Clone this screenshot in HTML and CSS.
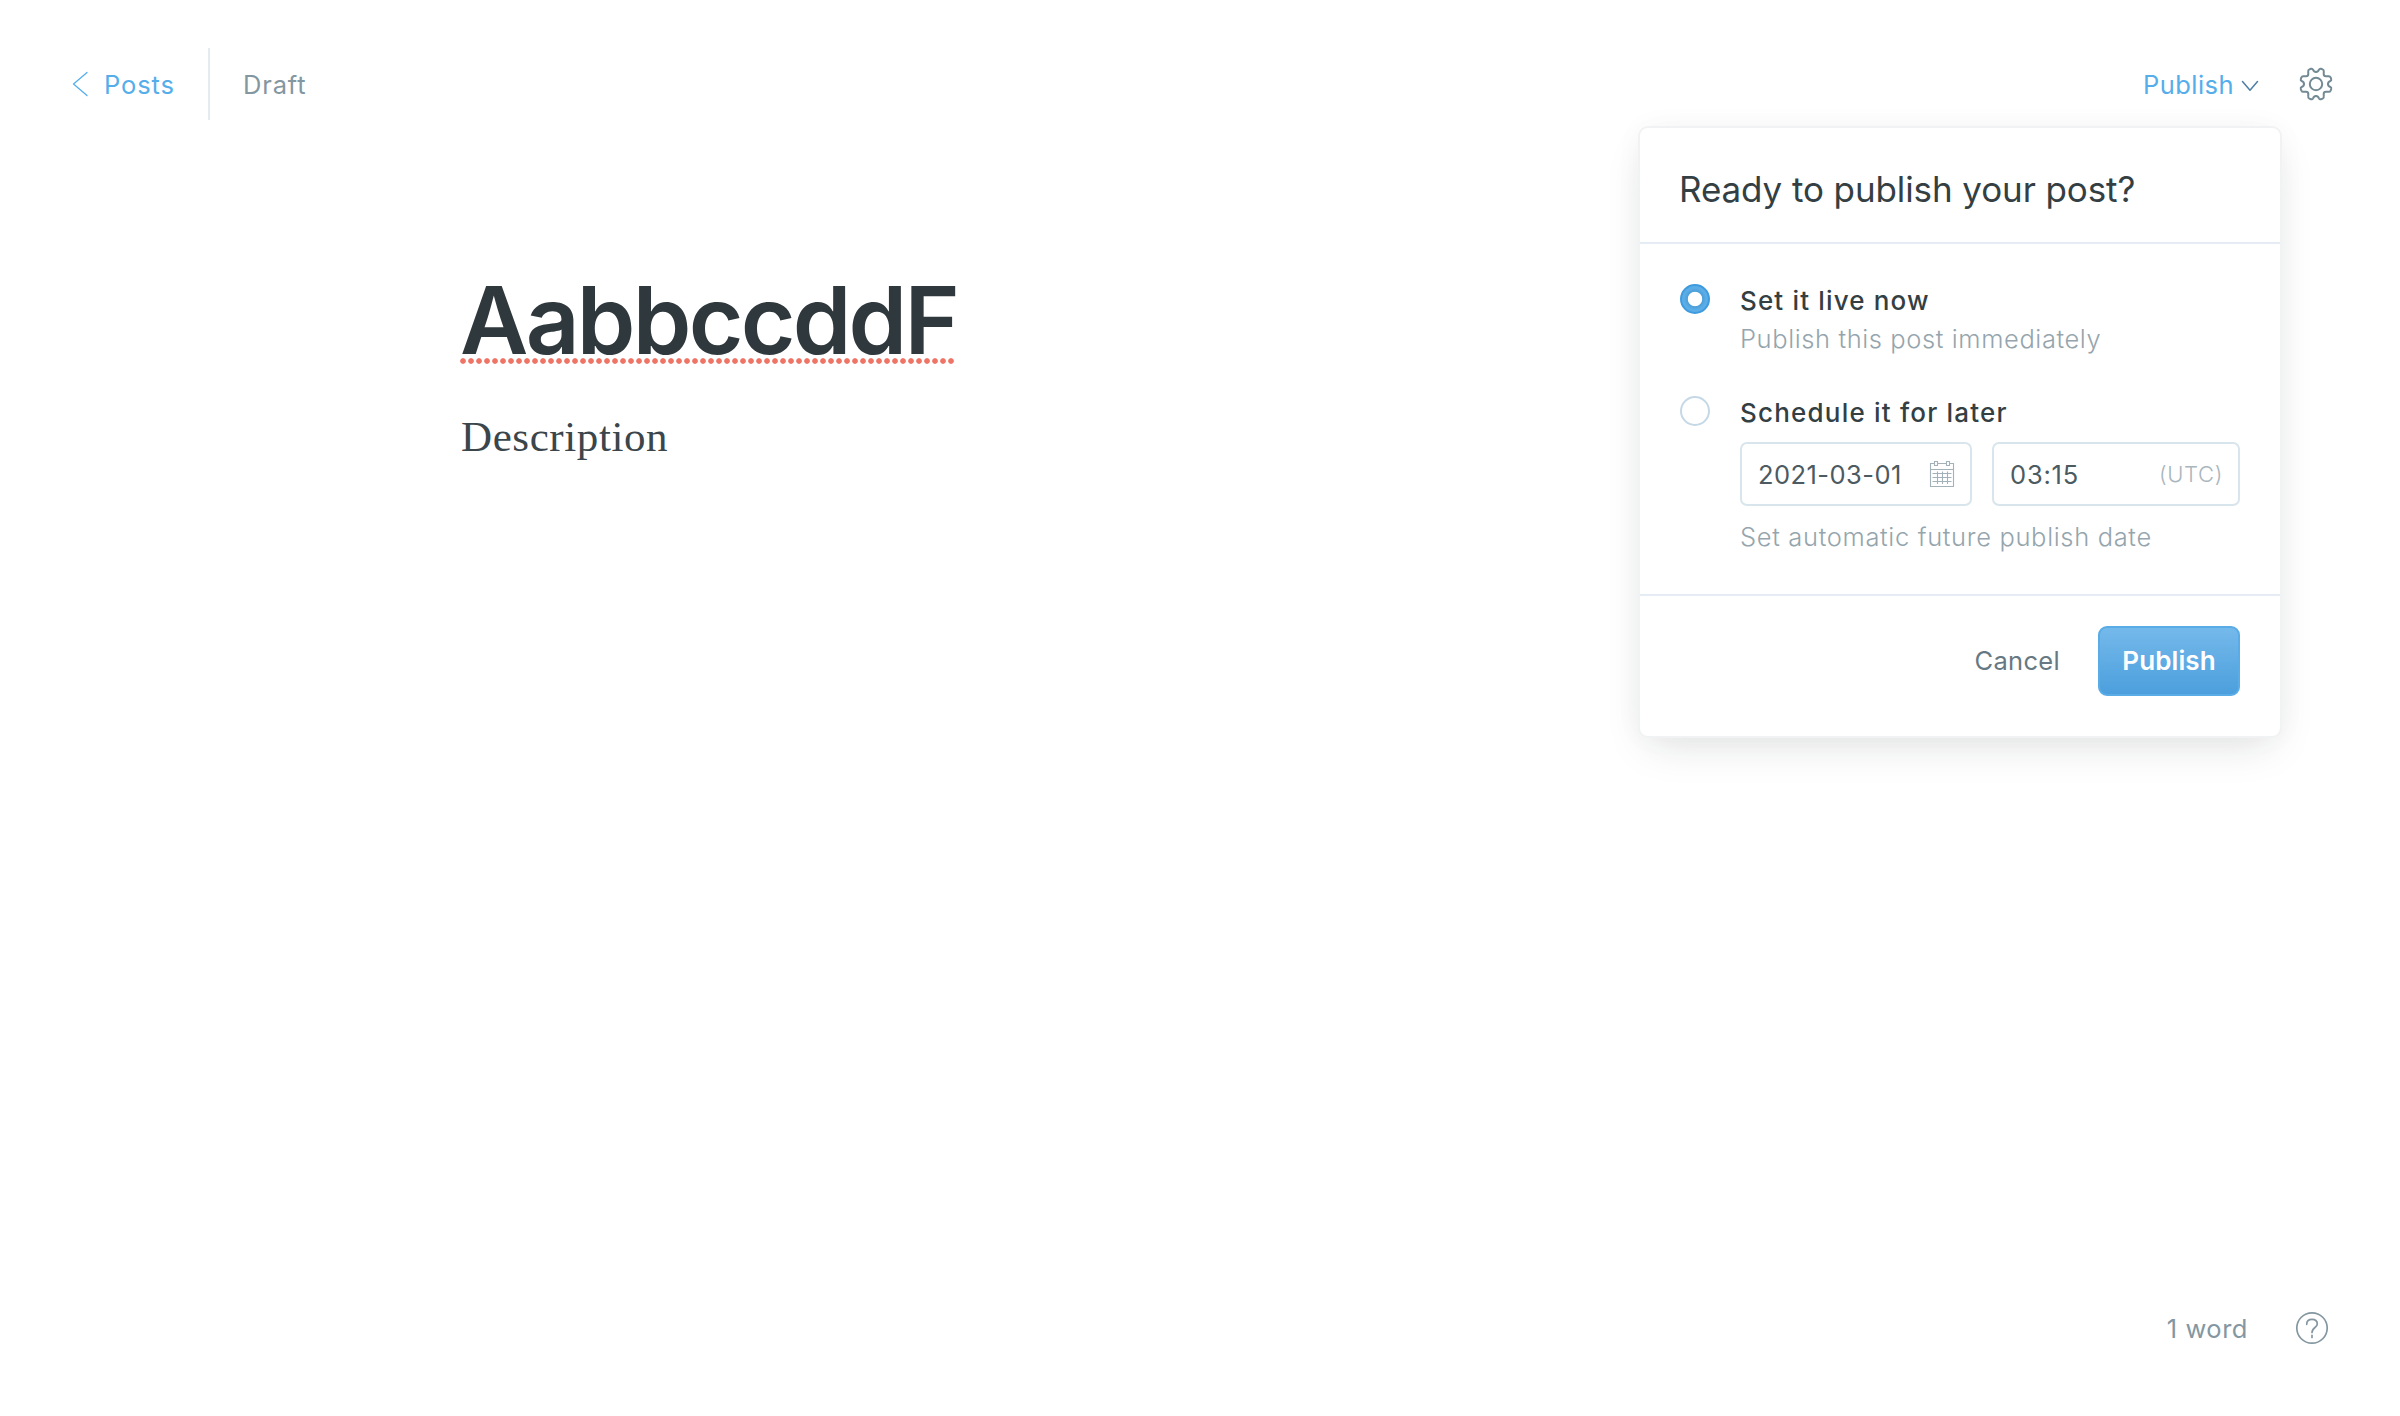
FILE: index.html
```html
<!DOCTYPE html>
<html lang="en">
<head>
<meta charset="utf-8">
<title>Draft post</title>
<link rel="stylesheet" href="styles.css">
</head>
<body>
<div class="editor">
  <header class="topbar">
    <a class="back">
      <svg class="back-icon" width="16" height="26" viewBox="0 0 16 26"><path d="M15 1.5 1.5 13 15 24.5"/></svg>
      <span>Posts</span>
    </a>
    <span class="status">Draft</span>
    <div class="actions">
      <a class="publish-trigger">Publish
        <svg class="chevron" width="18" height="12" viewBox="0 0 18 12"><path d="M1.5 1.5 9 10.2 16.5 1.5"/></svg>
      </a>
      <svg class="gear" width="34" height="34" viewBox="-17 -17 34 34">
        <defs><path id="tooth" d="M0-12C2-12 2.5-13 3-14.3Q3.6-15.6 5-15.2L6.6-14.6Q8-14 7.8-12.4L7.7-10Q7.7-7.7 10-7.7L12.4-7.8Q14-8 14.6-6.6L15.2-5Q15.6-3.6 14.3-3C13-2.5 12-2 12 0"/></defs>
        <use href="#tooth"/><use href="#tooth" transform="rotate(90)"/><use href="#tooth" transform="rotate(180)"/><use href="#tooth" transform="rotate(270)"/>
        <circle r="6.2"/>
      </svg>
    </div>
  </header>

  <main class="post">
    <h1 class="post-title"><span class="misspelled">AabbccddF</span></h1>
    <p class="post-body">Description</p>
  </main>

  <footer class="bottombar">
    <span class="word-count">1 word</span>
    <svg class="help" width="34" height="34" viewBox="0 0 34 34"><circle cx="17" cy="17" r="15.2"/><path d="M11.7 13.3C11.7 10 13.8 8.3 17 8.3S22.3 10.2 22.3 13C22.3 16.8 17 16.2 17 21.5"/><path d="M17 24.4v2"/></svg>
  </footer>

  <section class="popup">
    <h2 class="popup-title">Ready to publish your post?</h2>
    <div class="popup-body">
      <div class="option">
        <span class="radio radio-on"></span>
        <div>
          <div class="label label-now">Set it live now</div>
          <div class="hint">Publish this post immediately</div>
        </div>
      </div>
      <div class="option">
        <span class="radio"></span>
        <div>
          <div class="label">Schedule it for later</div>
          <div class="fields">
            <div class="field date"><span class="date-value">2021-03-01</span>
              <svg class="calendar" width="26" height="28" viewBox="-1 -1 26 28"><path d="M4 2.5H.5v23h23v-23H20M8 2.5h8M.5 8.5h23M4.5.5h3v4h-3zM16.500.5h3v4h-3z"/><path d="M2.500 12.500h19M2.500 16.500h19M2.500 20.500h19M7.500 10.500v12.500M12.500 10.500v12.500M17.500 10.500v12.500"/></svg>
            </div>
            <div class="field time"><span class="time-value">03:15</span><span class="zone">(UTC)</span></div>
          </div>
          <div class="hint hint-later">Set automatic future publish date</div>
        </div>
      </div>
    </div>
    <div class="popup-footer">
      <button class="cancel">Cancel</button>
      <button class="publish">Publish</button>
    </div>
  </section>
</div>
</body>
</html>
```
FILE: styles.css
```css
* { box-sizing: border-box; }

body {
  margin: 0;
  background: #fff;
  color: #343f44;
  font: 400 25.5px/36px Inter, "Liberation Sans", sans-serif;
}

svg { display: block; fill: none; stroke-linecap: round; stroke-linejoin: round; }

.editor {
  position: relative;
  display: flex;
  flex-direction: column;
  height: 1416px;
}

/* Top bar */
.topbar {
  display: flex;
  align-items: center;
  height: 168px;
  padding: 0 66px 0 72px;
}
.back {
  display: flex;
  align-items: center;
  width: 138px;
  height: 72px;
  border-right: 2px solid #e5ecf1;
  color: #55aeea;
  letter-spacing: 0.9px;
}
.back span { padding: 1px 0 0 16px; }
.back-icon { stroke: #55aeea; stroke-width: 1.3; }
.status {
  padding: 1px 0 0 33px;
  color: #8497a1;
  letter-spacing: 0.85px;
}
.actions {
  display: flex;
  align-items: center;
  margin-left: auto;
}
.publish-trigger {
  display: flex;
  align-items: center;
  gap: 7px;
  padding-top: 1px;
  color: #55aeea;
  letter-spacing: 0.45px;
}
.chevron { margin-top: 3px; stroke: #4e7ea5; stroke-width: 1.5; }
.gear { margin: 0 1px 0 40px; stroke: #738a94; stroke-width: 2; }

/* Post content */
.post { flex: 1; padding: 90px 0 0 460px; }
.post-title {
  margin: 0;
  color: #2f383c;
  font-size: 94px;
  font-weight: 600;
  line-height: 124px;
  letter-spacing: -2.75px;
}
.misspelled {
  display: inline-block;
  width: 494px;
  height: 106px;
  background: radial-gradient(circle at 3px 3px, #ee7565 2.4px, rgba(238, 117, 101, 0) 3.2px) 0 100px / 8px 6px repeat-x;
}
.post-body {
  margin: 23px 0 0 1px;
  color: #3a464b;
  font: 43px/64px Georgia, "Liberation Serif", serif;
  letter-spacing: 0.6px;
}

/* Bottom bar */
.bottombar {
  display: flex;
  align-items: center;
  justify-content: flex-end;
  height: 176px;
  padding: 0 71px 0 0;
}
.word-count { padding-top: 2px; color: #8497a1; letter-spacing: 0.52px; }
.help { margin-left: 47px; stroke: #8497a1; stroke-width: 1.7; }

/* Publish menu */
.popup {
  position: absolute;
  top: 126px;
  right: 118px;
  width: 644px;
  border: 2px solid #f1f2f3;
  border-radius: 10px;
  background: #fff;
  box-shadow: 0 16px 40px -10px rgba(20, 30, 30, 0.13), 0 0 30px rgba(20, 30, 30, 0.03);
}
.popup-title {
  height: 116px;
  margin: 0;
  padding: 9px 0 0 39px;
  border-bottom: 2px solid #e5ecf3;
  color: #343f44;
  font-size: 35px;
  font-weight: 400;
  line-height: 105px;
  letter-spacing: -0.1px;
}
.popup-body {
  display: flex;
  flex-direction: column;
  gap: 36px;
  padding: 40px;
  height: 350px;
}
.option { display: grid; grid-template-columns: 60px 1fr; }
.radio {
  width: 30px;
  height: 30px;
  border: 2px solid #c5d8e6;
  border-radius: 50%;
}
.radio-on {
  border-color: #3e9bdd;
  background: radial-gradient(circle, #fff 6.8px, #4c9fd8 7.6px, #5bade8 11px);
}
.label { font-size: 26px; font-weight: 500; line-height: 34px; letter-spacing: 1.2px; }
.label-now { letter-spacing: 1.15px; }
.hint {
  color: #95a5ad;
  font-weight: 300;
  line-height: 42px;
  letter-spacing: 0.6px;
}
.fields { display: grid; grid-template-columns: 232px 248px; gap: 20px; margin-top: 12px; }
.field {
  display: flex;
  align-items: center;
  justify-content: space-between;
  height: 64px;
  padding: 0 15px 0 16px;
  border: 2px solid #d9e5ec;
  border-radius: 7px;
  color: #4c5a61;
}
.date-value { padding-top: 1px; letter-spacing: 0.45px; }
.time-value { padding-top: 1px; letter-spacing: 0.8px; }
.calendar { stroke: #a3b1b8; stroke-width: 1.1; stroke-linecap: butt; stroke-linejoin: miter; }
.zone { color: #a9b6bd; font-size: 22px; font-weight: 300; letter-spacing: 0.65px; }
.hint-later { margin-top: 10px; letter-spacing: 0.66px; }

.popup-footer {
  display: flex;
  justify-content: flex-end;
  padding: 30px 40px 40px;
  border-top: 2px solid #e5ecf3;
}
button {
  height: 70px;
  padding: 0;
  border: 0;
  background: none;
  font: inherit;
}
.cancel { margin-right: 38px; color: #667982; letter-spacing: 0.31px; }
.publish {
  width: 142px;
  border: 2px solid #5aace6;
  border-radius: 9px;
  background: linear-gradient(#74b9eb, #4c9fdd);
  color: #fff;
  font-size: 26px;
  font-weight: 600;
  letter-spacing: 0.1px;
}
```
